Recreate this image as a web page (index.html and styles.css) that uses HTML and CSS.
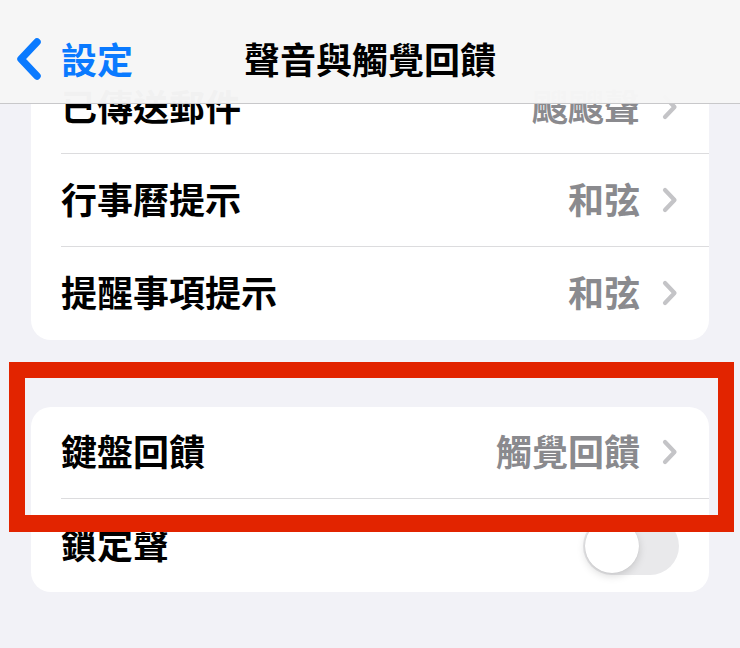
FILE: index.html
```html
<!DOCTYPE html>
<html lang="zh-Hant">
<head>
<meta charset="utf-8">
<link rel="stylesheet" href="styles.css">
</head>
<body>
<div class="screen">
  <div class="content">
    <div class="card card-first">
      <div class="row"><span class="label">已傳送郵件</span><span class="value">颼颼聲</span><span class="chev"><svg viewBox="0 0 16 26" width="16" height="26"><path d="M3 3 L12.5 13 L3 23" fill="none" stroke="#c4c4c7" stroke-width="4.2" stroke-linecap="round" stroke-linejoin="round"/></svg></span></div>
      <div class="row"><span class="label">行事曆提示</span><span class="value">和弦</span><span class="chev"><svg viewBox="0 0 16 26" width="16" height="26"><path d="M3 3 L12.5 13 L3 23" fill="none" stroke="#c4c4c7" stroke-width="4.2" stroke-linecap="round" stroke-linejoin="round"/></svg></span></div>
      <div class="row last"><span class="label">提醒事項提示</span><span class="value">和弦</span><span class="chev"><svg viewBox="0 0 16 26" width="16" height="26"><path d="M3 3 L12.5 13 L3 23" fill="none" stroke="#c4c4c7" stroke-width="4.2" stroke-linecap="round" stroke-linejoin="round"/></svg></span></div>
    </div>
    <div class="card card-second">
      <div class="row"><span class="label">鍵盤回饋</span><span class="value">觸覺回饋</span><span class="chev"><svg viewBox="0 0 16 26" width="16" height="26"><path d="M3 3 L12.5 13 L3 23" fill="none" stroke="#c4c4c7" stroke-width="4.2" stroke-linecap="round" stroke-linejoin="round"/></svg></span></div>
      <div class="row last"><span class="label">鎖定聲</span><span class="toggle"><span class="knob"></span></span></div>
    </div>
  </div>
  <div class="navbar">
    <div class="back">
      <svg class="back-icon" viewBox="0 0 28 44" width="28" height="44"><path d="M22 5 L6 22 L22 39" fill="none" stroke="#0a7aff" stroke-width="7.5" stroke-linecap="round" stroke-linejoin="round"/></svg>
      <span class="back-text">設定</span>
    </div>
    <div class="title">聲音與觸覺回饋</div>
  </div>
  <div class="highlight"></div>
</div>
</body>
</html>
```

FILE: styles.css
```css
html, body {
  margin: 0;
  padding: 0;
}
body {
  background: #f2f2f7;
  font-family: "Noto Sans CJK TC", "Noto Sans", sans-serif;
}
.screen {
  position: relative;
  width: 740px;
  height: 648px;
  overflow: hidden;
  background: #f2f2f7;
}
.content {
  display: flex;
  flex-direction: column;
  gap: 67px;
  padding: 61px 31px 0 31px;
}
.card {
  background: #ffffff;
  border-radius: 20px;
  overflow: hidden;
}
.card-first {
  border-top-left-radius: 0;
  border-top-right-radius: 0;
}
.row {
  position: relative;
  display: flex;
  align-items: center;
  height: 93px;
  padding: 0 31px 0 30px;
  box-sizing: border-box;
}
.row::after {
  content: "";
  position: absolute;
  left: 30px;
  right: 0;
  bottom: 0;
  height: 1.5px;
  background: #dcdcde;
}
.row.last::after {
  display: none;
}
.card-second .row:first-child {
  height: 92px;
}
.label {
  flex: 1;
  font-size: 36px;
  font-weight: 700;
  color: #000000;
  line-height: 1;
  padding-bottom: 6px;
}
.value {
  font-size: 36px;
  font-weight: 700;
  color: #8a8a8e;
  line-height: 1;
  padding-bottom: 6px;
}
.chev {
  display: flex;
  align-items: center;
  margin-left: 22px;
  width: 16px;
  padding-bottom: 2px;
}
.toggle {
  position: relative;
  width: 96px;
  height: 58px;
  border-radius: 29px;
  background: #e9e9eb;
  margin-right: -1px;
}
.knob {
  position: absolute;
  left: 2px;
  top: 2px;
  width: 54px;
  height: 54px;
  border-radius: 50%;
  background: #ffffff;
  box-shadow: 0 3px 8px rgba(0,0,0,0.15), 0 0 1px rgba(0,0,0,0.12);
}
.navbar {
  position: absolute;
  left: 0;
  top: 0;
  width: 740px;
  height: 104px;
  background: rgba(246,246,246,0.98);
  border-bottom: 1px solid #c8c8ca;
  box-sizing: border-box;
  display: flex;
  align-items: center;
  justify-content: center;
}
.back {
  position: absolute;
  left: 15px;
  top: 36px;
  display: flex;
  align-items: center;
}
.back-icon {
  display: block;
}
.back-text {
  margin-left: 18px;
  font-size: 36px;
  font-weight: 700;
  color: #0a7aff;
  line-height: 44px;
  padding-bottom: 2px;
}
.title {
  margin-top: 12px;
  font-size: 36px;
  font-weight: 700;
  color: #000000;
  line-height: 1;
}
.highlight {
  position: absolute;
  left: 9px;
  top: 362px;
  width: 725px;
  height: 170px;
  box-sizing: border-box;
  border: 16px solid #e22400;
  border-bottom-width: 17px;
}
```
